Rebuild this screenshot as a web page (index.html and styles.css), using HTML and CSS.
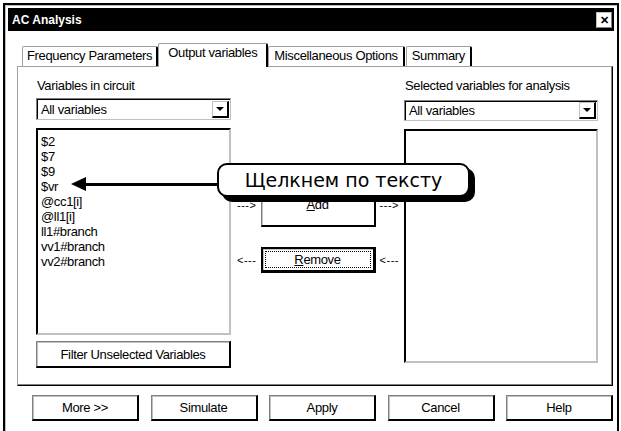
FILE: index.html
```html
<!DOCTYPE html>
<html lang="ru">
<head>
    <meta charset="UTF-8">
    <title>AC Analysis</title>
    <link rel="stylesheet" href="styles.css">
</head>
<body>

    <div class="window">
        <div class="titlebar">
            <span class="title">AC Analysis</span>
            <span class="close">&#x2715;</span>
        </div>

        <div class="tabs">
            <div class="tab">Frequency Parameters</div>
            <div class="tab active">Output variables</div>
            <div class="tab">Miscellaneous Options</div>
            <div class="tab">Summary</div>
        </div>

        <div class="panel">
            <div class="col">
                <div class="label">Variables in circuit</div>
                <div class="combo">
                    <span>All variables</span>
                    <span class="drop"></span>
                </div>
                <ul class="list">
                    <li>$2</li>
                    <li>$7</li>
                    <li>$9</li>
                    <li>$vr</li>
                    <li>@cc1[i]</li>
                    <li>@ll1[i]</li>
                    <li>ll1#branch</li>
                    <li>vv1#branch</li>
                    <li>vv2#branch</li>
                </ul>
                <div class="btn filter">Filter Unselected Variables</div>
            </div>

            <div class="middle">
                <div class="move-row add-row">
                    <span class="dash">---&gt;</span>
                    <div class="btn move add"><span><u>A</u>dd</span></div>
                    <span class="dash">---&gt;</span>
                </div>
                <div class="move-row">
                    <span class="dash">&lt;---</span>
                    <div class="btn move default"><span class="focus"><u>R</u>emove</span></div>
                    <span class="dash">&lt;---</span>
                </div>
            </div>

            <div class="col right">
                <div class="label">Selected variables for analysis</div>
                <div class="combo">
                    <span>All variables</span>
                    <span class="drop"></span>
                </div>
                <ul class="list"></ul>
            </div>
        </div>

        <div class="buttons">
            <div class="btn">More &gt;&gt;</div>
            <div class="btn">Simulate</div>
            <div class="btn">Apply</div>
            <div class="btn">Cancel</div>
            <div class="btn">Help</div>
        </div>
    </div>

    <!-- annotation over the dialog -->
    <div class="pointer">
        <span class="head"></span>
        <span class="shaft"></span>
    </div>
    <div class="callout">Щелкнем по тексту</div>

</body>
</html>
```

FILE: styles.css
```css
/* Basic Reset */
* {
    margin: 0;
    padding: 0;
    box-sizing: border-box;
}

body {
    font-family: "Liberation Sans", Arial, sans-serif;
    font-size: 13px;
    letter-spacing: -0.35px;
    color: #000;
    background-color: #fff;
    width: 621px;
    height: 431px;
    overflow: hidden;
    position: relative;
}

/* Dialog frame */
.window {
    margin: 3px 0 0 3px;
    width: 616px;
    height: 440px;
    border: 2px solid #000;
    padding: 3px;
    box-shadow: inset 1px 1px 0 #c0c0c0;
}

.titlebar {
    height: 23px;
    background-color: #000;
    color: #fff;
    display: flex;
    align-items: center;
    justify-content: space-between;
    padding: 0 2px 0 4px;
}

.title {
    font-weight: bold;
    font-size: 12px;
    letter-spacing: 0;
}

.close {
    width: 16px;
    height: 16px;
    background-color: #fff;
    color: #000;
    border: 1px solid #c0c0c0;
    border-right-color: #808080;
    border-bottom-color: #808080;
    font-size: 11px;
    font-weight: bold;
    line-height: 14px;
    text-align: center;
    letter-spacing: 0;
}

/* Tabs */
.tabs {
    display: flex;
    align-items: flex-end;
    gap: 1px;
    height: 35px;
    margin-left: 14px;
    position: relative;
    z-index: 1;
}

.tab {
    height: 20px;
    line-height: 18px;
    padding: 0 5px;
    border: 1px solid #a0a0a0;
    border-bottom: none;
    border-right: 2px solid #000;
    border-radius: 2px 2px 0 0;
    background-color: #fff;
    white-space: nowrap;
}

.tab:first-child {
    padding: 0 4px;
}

.tab.active {
    height: 24px;
    margin: 0 -1px -1px -1px;
    line-height: 18px;
    padding: 0 9px;
}

/* Page of the tab control */
.panel {
    margin-left: 9px;
    width: 596px;
    height: 320px;
    border: 1px solid #a0a0a0;
    border-right: 1px solid #000;
    border-bottom: 1px solid #000;
    box-shadow: inset -1px -1px 0 #808080;
    display: grid;
    grid-template-columns: 195px 1fr 194px;
    padding: 11px 14px 0 18px;
}

.col {
    display: flex;
    flex-direction: column;
}

.label {
    height: 16px;
    line-height: 16px;
    padding-left: 1px;
}

.combo {
    margin-top: 4px;
    height: 22px;
    border: 1px solid #808080;
    border-right-color: #c0c0c0;
    border-bottom-color: #c0c0c0;
    box-shadow: inset 1px 1px 0 #000;
    display: flex;
    align-items: center;
    justify-content: space-between;
    padding: 0 1px 0 4px;
}

.right .combo {
    margin-top: 6px;
    height: 21px;
}

.drop {
    width: 17px;
    height: 17px;
    border: 1px solid #c0c0c0;
    border-right: 2px solid #000;
    border-bottom: 2px solid #000;
    position: relative;
}

.drop::after {
    content: "";
    position: absolute;
    left: 3px;
    top: 5px;
    border-left: 4px solid transparent;
    border-right: 4px solid transparent;
    border-top: 4px solid #000;
}

.list {
    list-style: none;
    margin-top: 8px;
    height: 207px;
    border: 2px solid #000;
    border-right-color: #c0c0c0;
    border-bottom-color: #c0c0c0;
    padding: 4px 0 0 3px;
    line-height: 15px;
}

.right .list {
    height: 234px;
}

/* Buttons */
.btn {
    height: 25px;
    border-top: 1px solid #808080;
    border-left: 1px solid #808080;
    border-right: 2px solid #000;
    border-bottom: 2px solid #000;
    box-shadow: inset 1px 1px 0 #c0c0c0;
    display: flex;
    align-items: center;
    justify-content: center;
    white-space: nowrap;
}

.filter {
    margin-top: 6px;
    height: 27px;
}

.middle {
    display: flex;
    flex-direction: column;
    padding-top: 104px;
}

.move-row {
    display: flex;
    align-items: center;
    justify-content: space-between;
    padding: 0 5px 0 6px;
    height: 26px;
    margin-bottom: 20px;
}

.add-row {
    height: 45px;
}

.move {
    width: 115px;
    height: 100%;
}

.dash {
    font-size: 11px;
    letter-spacing: 0.5px;
}

.default {
    border: 2px solid #000;
    border-right-width: 3px;
    border-bottom-width: 3px;
    padding: 2px;
}

.focus {
    display: flex;
    align-items: center;
    justify-content: center;
    width: 100%;
    height: 100%;
    border: 1px dotted #000;
}

.buttons {
    display: flex;
    justify-content: space-between;
    margin: 9px 0 0 24px;
    width: 581px;
}

.buttons .btn {
    width: 107px;
    height: 26px;
}

/* Annotation */
.callout {
    position: absolute;
    left: 217px;
    top: 163px;
    width: 253px;
    height: 34px;
    background-color: #fff;
    border: 2px solid #000;
    border-radius: 10px;
    box-shadow: 5px 5px 0 #000;
    font-family: "DejaVu Sans", Verdana, sans-serif;
    font-size: 19px;
    letter-spacing: 0;
    line-height: 30px;
    text-align: center;
}

.pointer {
    position: absolute;
    left: 71px;
    top: 177px;
    width: 150px;
    height: 14px;
    display: flex;
    align-items: center;
}

.head {
    border-right: 15px solid #000;
    border-top: 7px solid transparent;
    border-bottom: 7px solid transparent;
}

.shaft {
    flex: 1;
    height: 3px;
    background-color: #000;
}
```
